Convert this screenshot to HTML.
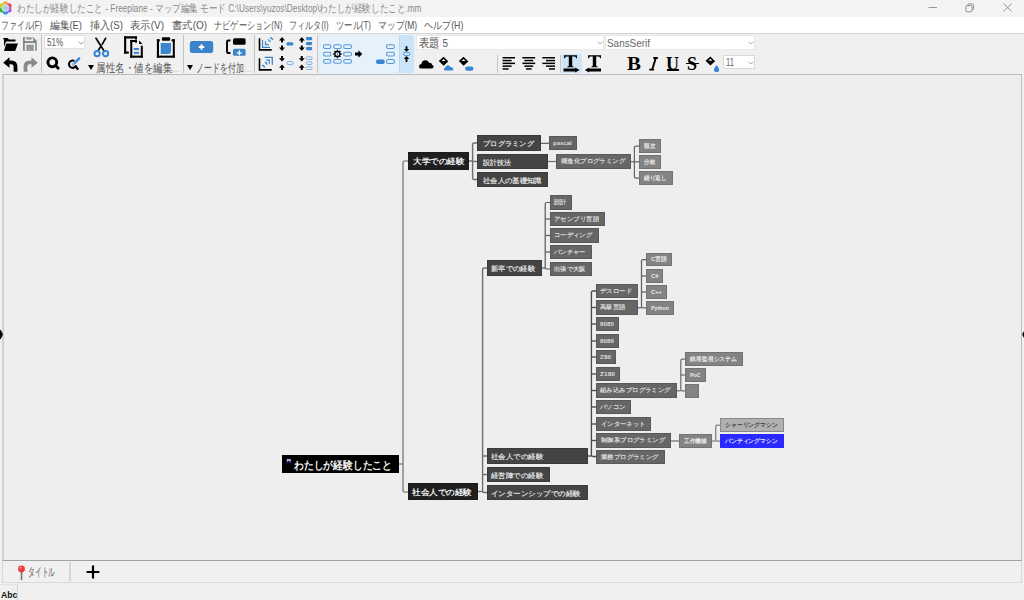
<!DOCTYPE html>
<html><head><meta charset="utf-8">
<style>
*{margin:0;padding:0;box-sizing:border-box}
html,body{width:1024px;height:600px;overflow:hidden;background:#f0f0f0;font-family:"Liberation Sans",sans-serif;position:relative}
.a{position:absolute}
#title{left:0;top:0;width:1024px;height:17px;background:#f3f3f3}
#title .t{left:17px;top:2px;font-size:11.5px;color:#8a8a8a;white-space:nowrap;line-height:13px}
#menu{left:0;top:17px;width:1024px;height:16px;background:#ffffff}
#menu span{position:absolute;top:2px;font-size:11.5px;color:#555;white-space:nowrap;line-height:13px}
#menuline{left:0;top:33px;width:1024px;height:1px;background:#d4d4d4}
#tb{left:0;top:34px;width:1024px;height:40px;background:#f0f0f0}
.sep{position:absolute;width:1px;background:#c4c4c4}
.combo{position:absolute;background:#fff;border:1px solid #e2e2e2;font-size:11.5px;color:#444;line-height:12px;padding-left:2px;white-space:nowrap}
.chev{position:absolute;right:0.5px;top:4.5px}
#map{left:2px;top:74px;width:1020px;height:487px;background:#eeeeee;border-top:1px solid #b9bcc2;border-left:2px solid #cdd0d6;border-right:1px solid #b9bcc2;border-bottom:1px solid #9fa2a8}
.edges{position:absolute;left:0;top:0}
.fit{position:absolute;display:inline-block;white-space:nowrap;transform-origin:0 50%}
.n{position:absolute;white-space:nowrap;overflow:hidden;box-shadow:inset 0 0 0 1px rgba(0,0,0,0.12)}
.l0{background:#000;color:#f4f4f4;font-weight:bold}
.l1{background:#1f1f1f;color:#eee;font-weight:bold}
.l2{background:#444444;color:#dedede;font-weight:bold}
.l3{background:#666666;color:#dcdcdc;font-weight:bold}
.l4{background:#838383;color:#ececec;font-weight:bold}
.l5{background:#b0b0b0;box-shadow:inset 0 0 0 1px rgba(0,0,0,0.22)!important;color:#3c3c3c;font-weight:bold}
.l6{background:#2a2aff;box-shadow:none!important;color:#e8e8ff;font-weight:bold}
#tabs{left:2px;top:561px;width:1020px;height:22px;background:#f0f0f0;border-left:1px solid #d8d8d8;border-right:1px solid #d8d8d8;border-bottom:1px solid #d8d8d8}
#status{left:0;top:583px;width:1024px;height:17px;background:#f0f0f0}
</style></head><body>
<div id="title" class="a">
 <svg class="a" style="left:0;top:1px" width="12" height="14" viewBox="0 0 12 14">
  <circle cx="5.5" cy="2.8" r="2.6" fill="#f4a93a"/><circle cx="9" cy="4.8" r="2.6" fill="#e8457a"/><circle cx="9" cy="9" r="2.6" fill="#b54ee8"/>
  <circle cx="5.5" cy="11" r="2.6" fill="#3b8fe8"/><circle cx="2" cy="9" r="2.6" fill="#3fb54a"/><circle cx="2" cy="4.8" r="2.6" fill="#c9d235"/>
  <circle cx="5.5" cy="6.9" r="3.6" fill="#cfe3ea"/><circle cx="5.5" cy="6.9" r="2" fill="#8fb6c8"/><circle cx="5.5" cy="6.9" r="0.9" fill="#dbe9ee"/>
 </svg>
 <span class="fit" style="transform:scaleX(0.7815);left:16.5px;top:2px;font-size:10.6px;line-height:13px;color:#8a8a8a">わたしが経験したこと - Freeplane - マップ編集 モード C:\Users\yuzos\Desktop\わたしが経験したこと.mm</span>
 <svg class="a" style="left:928px;top:7px" width="10" height="2"><rect x="0.5" y="0" width="8.5" height="1" fill="#9a9a9a"/></svg>
 <svg class="a" style="left:965px;top:3px" width="10" height="10" viewBox="0 0 10 10"><rect x="0.9" y="2.6" width="6.2" height="6.2" rx="1.2" fill="none" stroke="#8e8e8e" stroke-width="1"/><path d="M2.6 2.2Q2.8 0.9 4 0.9H7.2Q8.6 0.9 8.6 2.3V5.6Q8.6 6.8 7.4 7" fill="none" stroke="#8e8e8e" stroke-width="1"/></svg>
 <svg class="a" style="left:1003px;top:3px" width="10" height="10" viewBox="0 0 10 10"><path d="M0.6 0.5L8.6 8.5M8.6 0.5L0.6 8.5" stroke="#8e8e8e" stroke-width="0.95"/></svg>
</div>
<div id="menu" class="a">
 <span class="fit" style="transform:scaleX(0.7127);left:1px;top:2px;font-size:10.6px;line-height:13px;color:#555">ファイル(F)</span>
 <span class="fit" style="transform:scaleX(0.8858);left:50px;top:2px;font-size:10.6px;line-height:13px;color:#555">編集(E)</span>
 <span class="fit" style="transform:scaleX(0.9135);left:90px;top:2px;font-size:10.6px;line-height:13px;color:#555">挿入(S)</span>
 <span class="fit" style="transform:scaleX(0.9412);left:130px;top:2px;font-size:10.6px;line-height:13px;color:#555">表示(V)</span>
 <span class="fit" style="transform:scaleX(0.9384);left:172px;top:2px;font-size:10.6px;line-height:13px;color:#555">書式(O)</span>
 <span class="fit" style="transform:scaleX(0.7447);left:213.7px;top:2px;font-size:10.6px;line-height:13px;color:#555">ナビゲーション(N)</span>
 <span class="fit" style="transform:scaleX(0.7333);left:289px;top:2px;font-size:10.6px;line-height:13px;color:#555">フィルタ(I)</span>
 <span class="fit" style="transform:scaleX(0.7522);left:336px;top:2px;font-size:10.6px;line-height:13px;color:#555">ツール(T)</span>
 <span class="fit" style="transform:scaleX(0.7997);left:378.3px;top:2px;font-size:10.6px;line-height:13px;color:#555">マップ(M)</span>
 <span class="fit" style="transform:scaleX(0.8236);left:423.7px;top:2px;font-size:10.6px;line-height:13px;color:#555">ヘルプ(H)</span>
</div>
<div id="menuline" class="a"></div>
<div id="tb" class="a"></div>
<!-- folder -->
<svg class="a" style="left:2px;top:37px" width="17" height="16" viewBox="0 0 17 16">
 <path d="M1 2.2Q1 1 2.2 1H5.5L7 2.5H13.5V4.5H4L2 10V2.2Z" fill="#000"/>
 <path d="M4.3 6.5H16L13.2 14H2Z" fill="#000"/>
</svg>
<!-- save -->
<svg class="a" style="left:22px;top:36px" width="17" height="17" viewBox="0 0 17 17">
 <path d="M1 1.25H11.3L14.8 4.9V14.75H1Z" fill="#858585"/>
 <rect x="2.8" y="1.75" width="8.4" height="3.3" fill="#f0f0f0"/>
 <rect x="4.5" y="2.1" width="5.1" height="1.4" fill="#8a8a8a"/>
 <rect x="2.8" y="7" width="10.4" height="7.75" fill="#f0f0f0"/>
 <rect x="4.3" y="8.75" width="7.5" height="6" fill="#979797"/>
</svg>
<!-- undo -->
<svg class="a" style="left:2px;top:56px" width="17" height="17" viewBox="0 0 17 17">
 <path d="M1.2 6.8L7.5 1.2V4.4H9.2Q15.4 4.4 15.4 10.5V15.8H11.6V10.5Q11.6 8.2 9.2 8.2H7.5V11.8Z" fill="#000"/>
</svg>
<!-- redo -->
<svg class="a" style="left:22px;top:56px" width="17" height="17" viewBox="0 0 17 17">
 <path d="M15.8 6.8L9.5 1.2V4.4H7.8Q1.6 4.4 1.6 10.5V15.8H5.4V10.5Q5.4 8.2 7.8 8.2H9.5V11.8Z" fill="#8a8a8a"/>
</svg>
<div class="sep" style="left:41px;top:35px;height:38px"></div>
<div class="combo" style="left:44px;top:35px;width:41px;height:14px;padding-top:1px"><span class="fit" style="transform:scaleX(0.6947);left:2px;top:0px;font-size:11.5px;line-height:13px;color:#555">51%</span>
 <svg class="chev" width="6" height="4" viewBox="0 0 6 4"><path d="M0.5 0.8L3 3L5.5 0.8" stroke="#888" fill="none" stroke-width="0.8"/></svg>
</div>
<!-- magnifier -->
<svg class="a" style="left:46px;top:56px" width="15" height="15" viewBox="0 0 15 15">
 <circle cx="6.3" cy="6.3" r="4.4" fill="none" stroke="#000" stroke-width="2.9"/>
 <path d="M9.6 9.6L12.2 12.2" stroke="#000" stroke-width="2.8" stroke-linecap="round"/>
</svg>
<svg class="a" style="left:67px;top:56px" width="15" height="15" viewBox="0 0 15 15">
 <path d="M7.4 4.9A3.7 3.7 0 1 0 9.2 9.4" fill="none" stroke="#000" stroke-width="2.1"/>
 <path d="M8.6 10.6L10.7 13" stroke="#000" stroke-width="2.3" stroke-linecap="round"/>
 <path d="M6.4 8.2L12.2 2.4" stroke="#3a85d0" stroke-width="2.3" stroke-linecap="round"/>
 <path d="M5.8 8.8L6.8 7.8" stroke="#8fbde8" stroke-width="2" stroke-linecap="round"/>
</svg>
<svg class="a" style="left:88px;top:65px" width="6" height="5" viewBox="0 0 6 5"><path d="M0 0H6L3 5Z" fill="#000"/></svg><span class="fit" style="transform:scaleX(0.7917);left:95.5px;top:61.5px;font-size:11.5px;line-height:13px;color:#555">属性名・値を編集</span><span class="fit" style="transform:scaleX(0.6957);left:172px;top:61.5px;font-size:11.5px;line-height:13px;color:#bbb">…</span>
<!-- scissors -->
<svg class="a" style="left:92px;top:37px" width="19" height="21" viewBox="0 0 19 21">
 <path d="M4 1.3L12.1 14" stroke="#000" stroke-width="1.7" stroke-linecap="round"/>
 <path d="M13.6 1.3L10.2 7.3M8.7 9.6L6.4 13.3" stroke="#000" stroke-width="1.7" stroke-linecap="round"/>
 <circle cx="5.1" cy="16.6" r="2.65" fill="none" stroke="#3a85d0" stroke-width="2"/>
 <circle cx="13.6" cy="16.6" r="2.65" fill="none" stroke="#3a85d0" stroke-width="2"/>
</svg>
<!-- copy -->
<svg class="a" style="left:123px;top:35px" width="21" height="24" viewBox="0 0 21 24">
 <g fill="#000">
  <rect x="1.1" y="1.3" width="2.1" height="17.3"/>
  <rect x="1.1" y="1.3" width="12.9" height="2.1" rx="0.8"/>
  <rect x="12" y="1.3" width="2" height="3.4" rx="0.8"/>
  <rect x="1.1" y="16.5" width="4.7" height="2.1"/>
  <rect x="7.25" y="4.9" width="2.05" height="17.8"/>
  <rect x="7.25" y="4.9" width="6.75" height="2" rx="0.8"/>
  <rect x="12" y="4.9" width="2" height="3" rx="0.8"/>
  <rect x="7.25" y="20.6" width="12.55" height="2.1"/>
  <rect x="17.8" y="10.7" width="2" height="12"/>
  <path d="M16 5.4L19.6 8.9H16Z"/>
 </g>
 <rect x="10.8" y="13" width="5.2" height="2.1" fill="#3a85d0"/>
 <rect x="10.8" y="16.9" width="5.2" height="2" fill="#3a85d0"/>
</svg>
<!-- paste -->
<svg class="a" style="left:156px;top:36px" width="20" height="23" viewBox="0 0 20 23">
 <g fill="#000">
  <rect x="5.9" y="1.2" width="8.2" height="3.5" rx="1"/>
  <rect x="0.9" y="3.3" width="2.1" height="18.4"/>
  <rect x="0.9" y="3.3" width="2.9" height="2.1"/>
  <rect x="15.55" y="3.3" width="3.25" height="2.1"/>
  <rect x="16.8" y="3.3" width="2" height="18.4"/>
  <rect x="0.9" y="19.6" width="17.9" height="2.1"/>
 </g>
 <path d="M4.7 7.1H15V15.2Q15 17.9 12.3 17.9H4.7Z" fill="#3a85d0"/>
</svg>
<div class="sep" style="left:183px;top:35px;height:38px"></div>
<!-- add node -->
<svg class="a" style="left:189px;top:40px" width="26" height="15" viewBox="0 0 26 15">
 <rect x="0.8" y="1" width="23.4" height="12" rx="2.5" fill="#3a84cc"/>
 <path d="M12.5 4.2V9.8M9.7 7H15.3" stroke="#fff" stroke-width="1.8"/>
</svg>
<!-- add child -->
<svg class="a" style="left:225px;top:37px" width="22" height="20" viewBox="0 0 22 20">
 <path d="M5.5 3.5H3.3Q2 3.5 2 4.8V14.7Q2 16 3.3 16H5.5" fill="none" stroke="#000" stroke-width="1.9"/>
 <rect x="8" y="1.2" width="12.6" height="6.6" rx="1.6" fill="#000"/>
 <rect x="8" y="11.8" width="12.6" height="7" rx="1.6" fill="#3a84cc"/>
 <path d="M14.3 13.3V18.3M11.8 15.8H16.8" stroke="#fff" stroke-width="1.2"/>
</svg>
<svg class="a" style="left:187px;top:65px" width="6" height="5" viewBox="0 0 6 5"><path d="M0 0H6L3 5Z" fill="#000"/></svg><span class="fit" style="transform:scaleX(0.6667);left:195.5px;top:61.5px;font-size:11.5px;line-height:13px;color:#555">ノードを付加</span><span class="fit" style="transform:scaleX(0.6957);left:244px;top:61.5px;font-size:11.5px;line-height:13px;color:#bbb">…</span>
<div class="sep" style="left:254px;top:35px;height:38px"></div>
<!-- fold icons -->
<svg class="a" style="left:258px;top:36px" width="16" height="16" viewBox="0 0 16 16">
 <path d="M1.5 2.2V13.9H13.7" fill="none" stroke="#000" stroke-width="1.6"/>
 <g fill="none" stroke="#3a85d0" stroke-width="1.2">
  <path d="M4.5 4V11.3H12"/>
  <path d="M7.5 5.3V8.6H10.7"/>
  <path d="M10.3 3.3Q10.5 5.3 12.7 5.6" stroke-width="1.4"/>
  <path d="M12.7 1.1Q12.9 3.1 15.1 3.4" stroke-width="1.5"/>
 </g>
</svg>
<svg class="a" style="left:258px;top:55px" width="16" height="16" viewBox="0 0 16 16">
 <path d="M1.5 3.2V14.9H13.7" fill="none" stroke="#000" stroke-width="1.6"/>
 <g fill="none" stroke="#3a85d0" stroke-width="1.3">
  <path d="M6.7 2.3H14.3V9.8"/>
  <path d="M8.3 5.2H11.3V8.7" stroke-width="1.2"/>
  <path d="M6.8 7.3Q8.7 7.5 9 9.6" stroke-width="1.4"/>
  <path d="M4 10.3Q5.9 10.5 6.7 12.6" stroke-width="1.5"/>
 </g>
</svg>
<svg class="a" style="left:278px;top:36px" width="16" height="16" viewBox="0 0 16 16">
 <path d="M4 1L7 4.4H5V6.6H3V4.4H1Z" fill="#000"/>
 <path d="M4 15L7 11.6H5V9.4H3V11.6H1Z" fill="#000"/>
 <rect x="8.5" y="6.3" width="6.8" height="3.2" rx="1.2" fill="#3a85d0"/>
</svg>
<svg class="a" style="left:278px;top:55px" width="16" height="16" viewBox="0 0 16 16">
 <path d="M4 6.6L7 3.2H5V1H3V3.2H1Z" fill="#000"/>
 <path d="M4 9.4L1 12.8H3V15H5V12.8H7Z" fill="#000"/>
 <rect x="9" y="6.5" width="6" height="3" rx="1.2" fill="none" stroke="#74a8dc" stroke-width="0.9"/>
</svg>
<svg class="a" style="left:298px;top:36px" width="16" height="16" viewBox="0 0 16 16">
 <path d="M3.8 1L6.8 4.4H4.8V6.6H2.8V4.4H0.8Z" fill="#000"/>
 <path d="M3.8 15L6.8 11.6H4.8V9.4H2.8V11.6H0.8Z" fill="#000"/>
 <rect x="8" y="1" width="6.2" height="3.2" rx="1.1" fill="#3a85d0"/>
 <rect x="8" y="6" width="6.2" height="3.2" rx="1.1" fill="#3a85d0"/>
 <rect x="8" y="11" width="6.2" height="3.2" rx="1.1" fill="#3a85d0"/>
</svg>
<svg class="a" style="left:298px;top:55px" width="16" height="16" viewBox="0 0 16 16">
 <path d="M3.8 6.6L6.8 3.2H4.8V1H2.8V3.2H0.8Z" fill="#000"/>
 <path d="M3.8 9.4L0.8 12.8H2.8V15H4.8V12.8H6.8Z" fill="#000"/>
 <rect x="8.4" y="1.9" width="5.6" height="2.6" rx="1" fill="none" stroke="#74a8dc" stroke-width="0.9"/>
 <rect x="8.4" y="6.9" width="5.6" height="2.6" rx="1" fill="none" stroke="#74a8dc" stroke-width="0.9"/>
 <rect x="8.4" y="11.9" width="5.6" height="2.6" rx="1" fill="none" stroke="#74a8dc" stroke-width="0.9"/>
</svg>
<div class="sep" style="left:317px;top:35px;height:38px"></div>
<!-- highlighted layout buttons -->
<div class="a" style="left:319px;top:35px;width:81px;height:38px;background:#e5f1fb;border:1px solid #e0eefa"></div>
<div class="a" style="left:399px;top:35px;width:15px;height:38px;background:#cce4f7;border-left:1px solid #b3d7f5;border-radius:0 2px 2px 0"></div>
<svg class="a" style="left:321px;top:42px" width="76" height="24" viewBox="0 0 76 24">
 <g fill="none" stroke="#5597d8" stroke-width="1.05">
  <rect x="2.45" y="2.75" width="7.5" height="3.75" rx="1.8"/><rect x="12.65" y="2.75" width="7.6" height="3.75" rx="1.8"/><rect x="22.65" y="2.75" width="7.9" height="3.75" rx="1.8"/>
  <rect x="2.45" y="10.25" width="7.5" height="3.75" rx="1.8"/><rect x="22.65" y="10.25" width="7.9" height="3.75" rx="1.8"/>
  <rect x="2.45" y="17.45" width="7.5" height="3.85" rx="1.8"/><rect x="12.65" y="17.45" width="7.6" height="3.85" rx="1.8"/><rect x="22.65" y="17.45" width="7.9" height="3.85" rx="1.8"/>
  <rect x="65.5" y="2.75" width="8" height="3.75" rx="1.8"/><rect x="65.5" y="10.25" width="8" height="3.75" rx="1.8"/><rect x="65.5" y="17.5" width="8" height="4" rx="1.8"/>
 </g>
 <rect x="55" y="17.5" width="8.75" height="4.5" rx="2" fill="#3a85d0"/>
 <g transform="translate(16.4 12)">
  <circle r="2.5" fill="none" stroke="#000" stroke-width="1.3"/>
  <circle r="0.6" fill="#000"/>
  <g stroke="#000" stroke-width="1.3">
   <path d="M0 -4.2V-2.6M0 4.2V2.6M-4.2 0H-2.6M4.2 0H2.6M-3 -3L-1.9 -1.9M3 3L1.9 1.9M-3 3L-1.9 1.9M3 -3L1.9 -1.9"/>
  </g>
 </g>
 <path d="M34 10.6H37.4V8.3L41.3 12L37.4 15.8V13.5H34Z" fill="#000"/>
</svg>
<svg class="a" style="left:401px;top:45px" width="11" height="18" viewBox="0 0 11 18">
 <path d="M5.5 6.75L8.3 3.9H6.4V1.2H4.6V3.9H2.7Z" fill="#000"/>
 <path d="M5.5 11L8.3 13.9H6.4V17H4.6V13.9H2.7Z" fill="#000"/>
 <rect x="2.6" y="7.3" width="6.2" height="3.3" rx="1.5" fill="none" stroke="#5597d8" stroke-width="1"/>
</svg>
<div class="combo" style="left:416px;top:35px;width:188px;height:15px;padding-top:1px;border-color:#e8e8e8"><span class="fit" style="transform:scaleX(0.8633);left:2px;top:1px;font-size:11.5px;line-height:13px;color:#555">表題 5</span>
 <svg class="chev" style="top:5px" width="6" height="4" viewBox="0 0 6 4"><path d="M0.5 0.8L3 3L5.5 0.8" stroke="#999" fill="none" stroke-width="0.8"/></svg>
</div>
<!-- cloud -->
<svg class="a" style="left:418px;top:58px" width="17" height="12" viewBox="0 0 17 12">
 <path d="M3.4 10.6Q1 10.6 1 8.4Q1 6.2 3.4 6.1Q3.8 2.4 7.4 2.2Q10.2 2.2 11.1 5Q12.2 4.4 13.2 5.2Q14 5.8 13.9 6.8Q15.6 7.2 15.6 8.8Q15.6 10.6 13.6 10.6Z" fill="#000"/>
</svg>
<svg class="a" style="left:438px;top:56px" width="17" height="16" viewBox="0 0 17 16">
 <path d="M5.6 0.8L10.4 5.6L9.4 6.2L5.6 9.8L0.8 5Z" fill="#000"/>
 <path d="M3.6 5L5.6 3L7.6 5Z" fill="#f0f0f0"/>
 <path d="M7.4 14.6Q5.8 14.6 5.8 13.2Q5.8 11.9 7.2 11.8Q7.6 9.2 10 9.2Q11.8 9.2 12.4 11Q13.4 10.9 13.9 11.6Q15.3 11.9 15.3 13.2Q15.3 14.6 13.9 14.6Z" fill="#3a85d0"/>
</svg>
<svg class="a" style="left:458px;top:56px" width="17" height="16" viewBox="0 0 17 16">
 <path d="M5.6 0.8L10.4 5.6L9.4 6.2L5.6 9.8L0.8 5Z" fill="#000"/>
 <path d="M3.6 5L5.6 3L7.6 5Z" fill="#f0f0f0"/>
 <rect x="7.2" y="10.4" width="8.2" height="4.4" rx="2" fill="#3a85d0"/>
</svg>
<div class="sep" style="left:497px;top:55px;height:18px"></div>
<!-- align -->
<svg class="a" style="left:502px;top:56px" width="15" height="15" viewBox="0 0 15 15">
 <g fill="#000"><rect x="0.6" y="1" width="12.4" height="1.5"/><rect x="0.6" y="3.8" width="9" height="1.5"/><rect x="0.6" y="6.6" width="12.4" height="1.5"/><rect x="0.6" y="9.4" width="9" height="1.5"/><rect x="0.6" y="12.2" width="6" height="1.5"/></g>
</svg>
<svg class="a" style="left:522px;top:56px" width="15" height="15" viewBox="0 0 15 15">
 <g fill="#000"><rect x="0.4" y="1" width="12.8" height="1.5"/><rect x="2.4" y="3.8" width="8.8" height="1.5"/><rect x="0.4" y="6.6" width="12.8" height="1.5"/><rect x="2.4" y="9.4" width="8.8" height="1.5"/><rect x="4" y="12.2" width="5.6" height="1.5"/></g>
</svg>
<svg class="a" style="left:542px;top:56px" width="15" height="15" viewBox="0 0 15 15">
 <g fill="#000"><rect x="0.4" y="1" width="12.6" height="1.5"/><rect x="4" y="3.8" width="9" height="1.5"/><rect x="0.4" y="6.6" width="12.6" height="1.5"/><rect x="4" y="9.4" width="9" height="1.5"/><rect x="7" y="12.2" width="6" height="1.5"/></g>
</svg>
<div class="sep" style="left:560px;top:55px;height:18px"></div>
<div class="a" style="left:562px;top:54px;width:20px;height:19px;background:#cce4f7;border-radius:2px"></div>
<svg class="a" style="left:562px;top:54px" width="42" height="20" viewBox="0 0 42 20">
 <g fill="#000">
  <path d="M2 1.2H15V4.2L14.2 4.2Q13.8 2.6 12.6 2.6H10.2V11.6Q10.2 12.4 11.6 12.6V13.2H5.4V12.6Q6.8 12.4 6.8 11.6V2.6H4.4Q3.2 2.6 2.8 4.2H2Z"/>
  <path d="M1.6 14.6H13.2V13.4L17.6 16L13.2 18.6V17.4H1.6Z"/>
  <path d="M26 1.2H39V4.2L38.2 4.2Q37.8 2.6 36.6 2.6H34.2V11.6Q34.2 12.4 35.6 12.6V13.2H29.4V12.6Q30.8 12.4 30.8 11.6V2.6H28.4Q27.2 2.6 26.8 4.2H26Z"/>
  <path d="M39 14.6H27.2V13.4L22.8 16L27.2 18.6V17.4H39Z"/>
 </g>
</svg>
<div class="combo" style="left:605px;top:35px;width:150px;height:15px;padding-top:1px;border-color:#e8e8e8;color:#555"><span class="fit" style="transform:scaleX(0.8624);left:1px;top:1px;font-size:11.5px;line-height:13px;color:#666">SansSerif</span>
 <svg class="chev" style="top:5px" width="6" height="4" viewBox="0 0 6 4"><path d="M0.5 0.8L3 3L5.5 0.8" stroke="#999" fill="none" stroke-width="0.8"/></svg>
</div>
<div class="a" style="left:627px;top:54px;transform:scaleX(1.16);transform-origin:0 0;font-family:'Liberation Serif',serif;font-weight:bold;font-size:18px;line-height:20px;color:#000">B</div>
<svg class="a" style="left:648px;top:56px" width="12" height="16" viewBox="0 0 12 16"><path d="M7.7 2.2L4.2 13.6" stroke="#000" stroke-width="1.9"/><rect x="5.3" y="1.1" width="4.6" height="1.8" rx="0.5" fill="#000"/><rect x="1.2" y="12.8" width="4.8" height="1.8" rx="0.5" fill="#000"/></svg>
<div class="a" style="left:666px;top:54px;font-family:'Liberation Serif',serif;font-weight:bold;font-size:18px;line-height:20px;color:#000">U</div>
<div class="a" style="left:667px;top:69.4px;width:12px;height:1.6px;background:#000"></div>
<div class="a" style="left:687px;top:54px;font-family:'Liberation Serif',serif;font-weight:bold;font-size:18px;line-height:20px;color:#000">S</div>
<div class="a" style="left:686px;top:63.2px;width:13px;height:1.3px;background:#000"></div>
<svg class="a" style="left:705px;top:56px" width="16" height="16" viewBox="0 0 16 16">
 <path d="M5.4 0.6L10.2 5.4L9.2 6L5.4 9.6L0.6 4.8Z" fill="#000"/>
 <path d="M3.4 4.8L5.4 2.8L7.4 4.8Z" fill="#f0f0f0"/>
 <path d="M11.6 9Q9 12.2 9 13.4A2.6 2.6 0 0 0 14.2 13.4Q14.2 12.2 11.6 9Z" fill="#3a85d0"/>
</svg>
<div class="combo" style="left:723px;top:55px;width:32px;height:14px;padding-top:1px;border-color:#d8d8d8;color:#555"><span class="fit" style="transform:scaleX(0.6693);left:2px;top:0px;font-size:11.5px;line-height:13px;color:#666">11</span>
 <svg class="chev" style="top:5px" width="6" height="4" viewBox="0 0 6 4"><path d="M0.5 0.8L3 3L5.5 0.8" stroke="#999" fill="none" stroke-width="0.8"/></svg>
</div>
<div id="map" class="a">
<div class="a" style="left:-4px;top:-75px;width:1024px;height:600px">
<svg class="edges" width="1024" height="600" viewBox="0 0 1024 600"><path d="M408 161H404.6Q403 161 403 162.6V490.4Q403 492 404.6 492H408" stroke="#8e8e8e" stroke-width="1.6" fill="none"/><path d="M399 464H403" stroke="#8e8e8e" stroke-width="1.6" fill="none"/><path d="M477 143H474.20000000000005Q472.6 143 472.6 144.6V177.9Q472.6 179.5 474.20000000000005 179.5H477" stroke="#6e6e6e" stroke-width="1.4" fill="none"/><path d="M472.6 161.5H477" stroke="#6e6e6e" stroke-width="1.4" fill="none"/><path d="M469 161H472.6" stroke="#6e6e6e" stroke-width="1.4" fill="none"/><path d="M487 268H484.20000000000005Q482.6 268 482.6 269.6V490.9Q482.6 492.5 484.20000000000005 492.5H487" stroke="#6e6e6e" stroke-width="1.4" fill="none"/><path d="M482.6 456H487" stroke="#6e6e6e" stroke-width="1.4" fill="none"/><path d="M482.6 474.5H487" stroke="#6e6e6e" stroke-width="1.4" fill="none"/><path d="M478 491.5H482.6" stroke="#6e6e6e" stroke-width="1.4" fill="none"/><path d="M545 143.3H549" stroke="#505050" stroke-width="1.1" fill="none"/><path d="M541 143.3H545" stroke="#505050" stroke-width="1.1" fill="none"/><path d="M552 161.5H556" stroke="#707070" stroke-width="1.2" fill="none"/><path d="M548 161.5H552" stroke="#707070" stroke-width="1.2" fill="none"/><path d="M639 146H636.0Q634.4 146 634.4 147.6V176.4Q634.4 178 636.0 178H639" stroke="#666666" stroke-width="1.25" fill="none"/><path d="M634.4 161.8H639" stroke="#666666" stroke-width="1.25" fill="none"/><path d="M631 161.8H634.4" stroke="#666666" stroke-width="1.25" fill="none"/><path d="M550 202.5H546.8000000000001Q545.2 202.5 545.2 204.1V267.4Q545.2 269 546.8000000000001 269H550" stroke="#5a5a5a" stroke-width="1.2" fill="none"/><path d="M545.2 219H550" stroke="#5a5a5a" stroke-width="1.2" fill="none"/><path d="M545.2 235.5H550" stroke="#5a5a5a" stroke-width="1.2" fill="none"/><path d="M545.2 252H550" stroke="#5a5a5a" stroke-width="1.2" fill="none"/><path d="M541 268H545.2" stroke="#5a5a5a" stroke-width="1.2" fill="none"/><path d="M596 291H593.0Q591.4 291 591.4 292.6V454.9Q591.4 456.5 593.0 456.5H596" stroke="#4c4c4c" stroke-width="1.35" fill="none"/><path d="M591.4 307.5H596" stroke="#4c4c4c" stroke-width="1.35" fill="none"/><path d="M591.4 324H596" stroke="#4c4c4c" stroke-width="1.35" fill="none"/><path d="M591.4 341H596" stroke="#4c4c4c" stroke-width="1.35" fill="none"/><path d="M591.4 357H596" stroke="#4c4c4c" stroke-width="1.35" fill="none"/><path d="M591.4 374H596" stroke="#4c4c4c" stroke-width="1.35" fill="none"/><path d="M591.4 390.5H596" stroke="#4c4c4c" stroke-width="1.35" fill="none"/><path d="M591.4 407H596" stroke="#4c4c4c" stroke-width="1.35" fill="none"/><path d="M591.4 424H596" stroke="#4c4c4c" stroke-width="1.35" fill="none"/><path d="M591.4 440.5H596" stroke="#4c4c4c" stroke-width="1.35" fill="none"/><path d="M588 456H591.4" stroke="#4c4c4c" stroke-width="1.35" fill="none"/><path d="M646 259.5H643.1Q641.5 259.5 641.5 261.1V306.2Q641.5 307.8 643.1 307.8H646" stroke="#616161" stroke-width="1.25" fill="none"/><path d="M641.5 276H646" stroke="#616161" stroke-width="1.25" fill="none"/><path d="M641.5 292H646" stroke="#616161" stroke-width="1.25" fill="none"/><path d="M638 307.8H641.5" stroke="#616161" stroke-width="1.25" fill="none"/><path d="M685 359H682.4Q680.8 359 680.8 360.6V389.2Q680.8 390.8 682.4 390.8H685" stroke="#707070" stroke-width="1.25" fill="none"/><path d="M680.8 375H685" stroke="#707070" stroke-width="1.25" fill="none"/><path d="M677 390.8H680.8" stroke="#707070" stroke-width="1.25" fill="none"/><path d="M675 441H679" stroke="#6a6a6a" stroke-width="1.2" fill="none"/><path d="M671 441H675" stroke="#6a6a6a" stroke-width="1.2" fill="none"/><path d="M720 425H717.3000000000001Q715.7 425 715.7 426.6V439.4Q715.7 441 717.3000000000001 441H720" stroke="#808080" stroke-width="1.25" fill="none"/><path d="M712 441H715.7" stroke="#808080" stroke-width="1.25" fill="none"/></svg>
<div class="n l0" style="left:282px;top:455px;width:117px;height:18px"><svg style="position:absolute;left:4px;top:3px" width="6" height="7" viewBox="0 0 6 7"><path d="M0.4 0.6H5.2V6.6L2.8 4.6L0.4 6.6Z" fill="#1a1a60"/><path d="M0.9 1.2H4.7V3.8L2.8 2.6L0.9 3.8Z" fill="#f2c8d4"/></svg><span class="fit" style="transform:scaleX(0.8909);left:12px;top:0.5px;line-height:18px;font-size:10.6px">わたしが経験したこと</span></div>
<div class="n l1" style="left:408px;top:152px;width:61px;height:18px"><span class="fit" style="transform:scaleX(1.0625);left:4.5px;top:1px;line-height:18px;font-size:8.0px">大学での経験</span></div>
<div class="n l1" style="left:408px;top:483px;width:70px;height:17px"><span class="fit" style="transform:scaleX(1.0714);left:4px;top:1px;line-height:17px;font-size:8.0px">社会人での経験</span></div>
<div class="n l2" style="left:477px;top:135px;width:64px;height:16px"><span class="fit" style="transform:scaleX(1.0408);left:6px;top:1px;line-height:16px;font-size:6.9px">プログラミング</span></div>
<div class="n l2" style="left:477px;top:154px;width:71px;height:15px"><span class="fit" style="transform:scaleX(1.0000);left:6px;top:1px;line-height:15px;font-size:6.9px">設計技法</span></div>
<div class="n l2" style="left:477px;top:172px;width:71px;height:15px"><span class="fit" style="transform:scaleX(1.0464);left:6px;top:1px;line-height:15px;font-size:6.9px">社会人の基礎知識</span></div>
<div class="n l2" style="left:487px;top:260px;width:55px;height:16px"><span class="fit" style="transform:scaleX(1.0476);left:4.2px;top:1px;line-height:16px;font-size:6.9px">新卒での経験</span></div>
<div class="n l2" style="left:487px;top:448px;width:101px;height:16px"><span class="fit" style="transform:scaleX(1.0612);left:4.4px;top:1px;line-height:16px;font-size:6.9px">社会人での経験</span></div>
<div class="n l2" style="left:487px;top:467px;width:63px;height:15px"><span class="fit" style="transform:scaleX(1.0612);left:4.4px;top:1px;line-height:15px;font-size:6.9px">経営陣での経験</span></div>
<div class="n l2" style="left:487px;top:485px;width:101px;height:15px"><span class="fit" style="transform:scaleX(1.0714);left:4.4px;top:1px;line-height:15px;font-size:6.9px">インターンシップでの経験</span></div>
<div class="n l3" style="left:549px;top:136px;width:28px;height:14px"><span class="fit" style="transform:scaleX(1.0007);left:4px;top:0px;line-height:14px;font-size:6.0px">pascal</span></div>
<div class="n l3" style="left:556px;top:154px;width:75px;height:15px"><span class="fit" style="transform:scaleX(1.0667);left:4.5px;top:0px;line-height:15px;font-size:6.0px">構造化プログラミング</span></div>
<div class="n l3" style="left:550px;top:195px;width:22px;height:15px"><span class="fit" style="transform:scaleX(1.0833);left:4.2px;top:0px;line-height:15px;font-size:6.0px">設計</span></div>
<div class="n l3" style="left:550px;top:212px;width:55px;height:14px"><span class="fit" style="transform:scaleX(1.0714);left:4.2px;top:0px;line-height:14px;font-size:6.0px">アセンブリ言語</span></div>
<div class="n l3" style="left:550px;top:228px;width:49px;height:15px"><span class="fit" style="transform:scaleX(1.0556);left:4.2px;top:0px;line-height:15px;font-size:6.0px">コーディング</span></div>
<div class="n l3" style="left:550px;top:245px;width:42px;height:14px"><span class="fit" style="transform:scaleX(1.0500);left:4.2px;top:0px;line-height:14px;font-size:6.0px">パンチャー</span></div>
<div class="n l3" style="left:550px;top:262px;width:42px;height:14px"><span class="fit" style="transform:scaleX(1.0500);left:4.2px;top:0px;line-height:14px;font-size:6.0px">出張で大阪</span></div>
<div class="n l3" style="left:596px;top:284px;width:42px;height:14px"><span class="fit" style="transform:scaleX(1.0667);left:4.2px;top:0px;line-height:14px;font-size:6.0px">デスロード</span></div>
<div class="n l3" style="left:596px;top:300px;width:42px;height:15px"><span class="fit" style="transform:scaleX(1.0625);left:4.2px;top:0px;line-height:15px;font-size:6.0px">高級言語</span></div>
<div class="n l3" style="left:596px;top:317px;width:23px;height:14px"><span class="fit" style="transform:scaleX(1.0480);left:4.2px;top:0px;line-height:14px;font-size:6.0px">8085</span></div>
<div class="n l3" style="left:596px;top:334px;width:23px;height:14px"><span class="fit" style="transform:scaleX(1.0480);left:4.2px;top:0px;line-height:14px;font-size:6.0px">8086</span></div>
<div class="n l3" style="left:596px;top:350px;width:20px;height:14px"><span class="fit" style="transform:scaleX(1.0634);left:4.2px;top:0px;line-height:14px;font-size:6.0px">Z80</span></div>
<div class="n l3" style="left:596px;top:367px;width:24px;height:14px"><span class="fit" style="transform:scaleX(1.0959);left:4.2px;top:0px;line-height:14px;font-size:6.0px">Z180</span></div>
<div class="n l3" style="left:596px;top:383px;width:81px;height:15px"><span class="fit" style="transform:scaleX(1.0712);left:4.2px;top:0px;line-height:15px;font-size:6.0px">組み込みプログラミング</span></div>
<div class="n l3" style="left:596px;top:400px;width:35px;height:14px"><span class="fit" style="transform:scaleX(1.0708);left:4.2px;top:0px;line-height:14px;font-size:6.0px">パソコン</span></div>
<div class="n l3" style="left:596px;top:417px;width:55px;height:14px"><span class="fit" style="transform:scaleX(1.0595);left:4.5px;top:0px;line-height:14px;font-size:6.0px">インターネット</span></div>
<div class="n l3" style="left:596px;top:433px;width:75px;height:15px"><span class="fit" style="transform:scaleX(1.0667);left:4.5px;top:0px;line-height:15px;font-size:6.0px">制御系プログラミング</span></div>
<div class="n l3" style="left:596px;top:450px;width:69px;height:14px"><span class="fit" style="transform:scaleX(1.0648);left:4.5px;top:0px;line-height:14px;font-size:6.0px">業務プログラミング</span></div>
<div class="n l4" style="left:639px;top:139px;width:22px;height:14px"><span class="fit" style="transform:scaleX(0.9167);left:5px;top:0px;line-height:14px;font-size:5.6px">順次</span></div>
<div class="n l4" style="left:639px;top:155px;width:22px;height:14px"><span class="fit" style="transform:scaleX(0.9167);left:5px;top:0px;line-height:14px;font-size:5.6px">分岐</span></div>
<div class="n l4" style="left:639px;top:171px;width:34px;height:14px"><span class="fit" style="transform:scaleX(0.9583);left:5px;top:0px;line-height:14px;font-size:5.6px">繰り返し</span></div>
<div class="n l4" style="left:646px;top:253px;width:26px;height:13px"><span class="fit" style="transform:scaleX(0.9971);left:4.5px;top:0px;line-height:13px;font-size:5.6px">C言語</span></div>
<div class="n l4" style="left:646px;top:269px;width:17px;height:14px"><span class="fit" style="transform:scaleX(1.0480);left:4.5px;top:0px;line-height:14px;font-size:5.6px">C#</span></div>
<div class="n l4" style="left:646px;top:285px;width:21px;height:14px"><span class="fit" style="transform:scaleX(1.0399);left:4.5px;top:0px;line-height:14px;font-size:5.6px">C++</span></div>
<div class="n l4" style="left:646px;top:301px;width:28px;height:14px"><span class="fit" style="transform:scaleX(0.9489);left:4.5px;top:0px;line-height:14px;font-size:5.6px">Python</span></div>
<div class="n l4" style="left:685px;top:352px;width:58px;height:14px"><span class="fit" style="transform:scaleX(0.9792);left:5px;top:0px;line-height:14px;font-size:5.6px">鉄塔監視システム</span></div>
<div class="n l4" style="left:685px;top:368px;width:21px;height:14px"><span class="fit" style="transform:scaleX(0.9385);left:5px;top:0px;line-height:14px;font-size:5.6px">PoC</span></div>
<div class="n l4" style="left:685px;top:384px;width:14px;height:14px"></div>
<div class="n l4" style="left:679px;top:434px;width:33px;height:14px"><span class="fit" style="transform:scaleX(0.9583);left:4.8px;top:0px;line-height:14px;font-size:5.6px">工作機械</span></div>
<div class="n l5" style="left:720px;top:418px;width:64px;height:14px"><span class="fit" style="transform:scaleX(0.9741);left:5px;top:0px;line-height:14px;font-size:5.6px">シャーリングマシン</span></div>
<div class="n l6" style="left:720px;top:434px;width:64px;height:14px"><span class="fit" style="transform:scaleX(0.9741);left:5px;top:0px;line-height:14px;font-size:5.6px">パンティングマシン</span></div>
</div>
</div>
<!-- side arrows -->
<svg class="a" style="left:0;top:328.5px" width="4" height="11" viewBox="0 0 4 11"><path d="M0 0.5L1 1.5L3 5.5L1 9.5L0 10.5Z" fill="#000"/></svg>
<svg class="a" style="left:1021px;top:330px" width="3" height="9" viewBox="0 0 3 9"><path d="M3 1L1.6 3.4Q1.2 4.5 1.6 5.6L3 8Z" fill="#000"/></svg>
<div id="tabs" class="a"></div>
<svg class="a" style="left:17px;top:564px" width="9" height="17" viewBox="0 0 9 17">
 <rect x="3.7" y="7" width="1.6" height="9" fill="#777"/>
 <circle cx="4.5" cy="5" r="3.4" fill="#ee3a3a"/>
 <circle cx="3.6" cy="3.8" r="1" fill="#f7a0a0"/>
</svg>
<span class="fit" style="transform:scaleX(0.5625);left:28px;top:566px;font-size:11.5px;line-height:13px;color:#555">タイトル</span>
<div class="sep" style="left:69px;top:562px;width:1.6px;height:19px;background:#d6d6d6"></div>
<svg class="a" style="left:86px;top:565px" width="14" height="14" viewBox="0 0 14 14"><path d="M7 0.6V13.4M0.6 7H13.4" stroke="#000" stroke-width="2.2"/></svg>
<div id="status" class="a"></div>
<div class="a" style="left:0;top:584px;width:18px;height:16px;border-right:1px solid #d0d0d0;border-top:1px solid #e4e4e4"></div>
<div class="a" style="left:1px;top:590.5px;font-size:8.6px;font-weight:bold;color:#111;line-height:9px">Abc</div>
<script>(function(){var W=[404.5,41,32,33,34,35,68.3,39.6,35,39.1,39.3,16,76,8,48,8,29,43,8,98,51,60,51,28,58.6,44,52,52,90,18.7,64,13,45,38,31.5,31.5,32,25.5,14,14,11,15,70.7,25.7,44.5,64,57.5,11,11,23,16,7.5,11,18,47,10.5,23,52.6,52.6,27];var e=document.querySelectorAll(".fit");if(e.length!==W.length)return;var t=[],i;for(i=0;i<e.length;i++){t.push(e[i].style.transform);e[i].style.transform="none";}for(i=0;i<e.length;i++){var w=e[i].getBoundingClientRect().width;e[i].style.transform=(w>0.5)?"scaleX("+(W[i]/w).toFixed(4)+")":t[i];}})();</script>
</body></html>
